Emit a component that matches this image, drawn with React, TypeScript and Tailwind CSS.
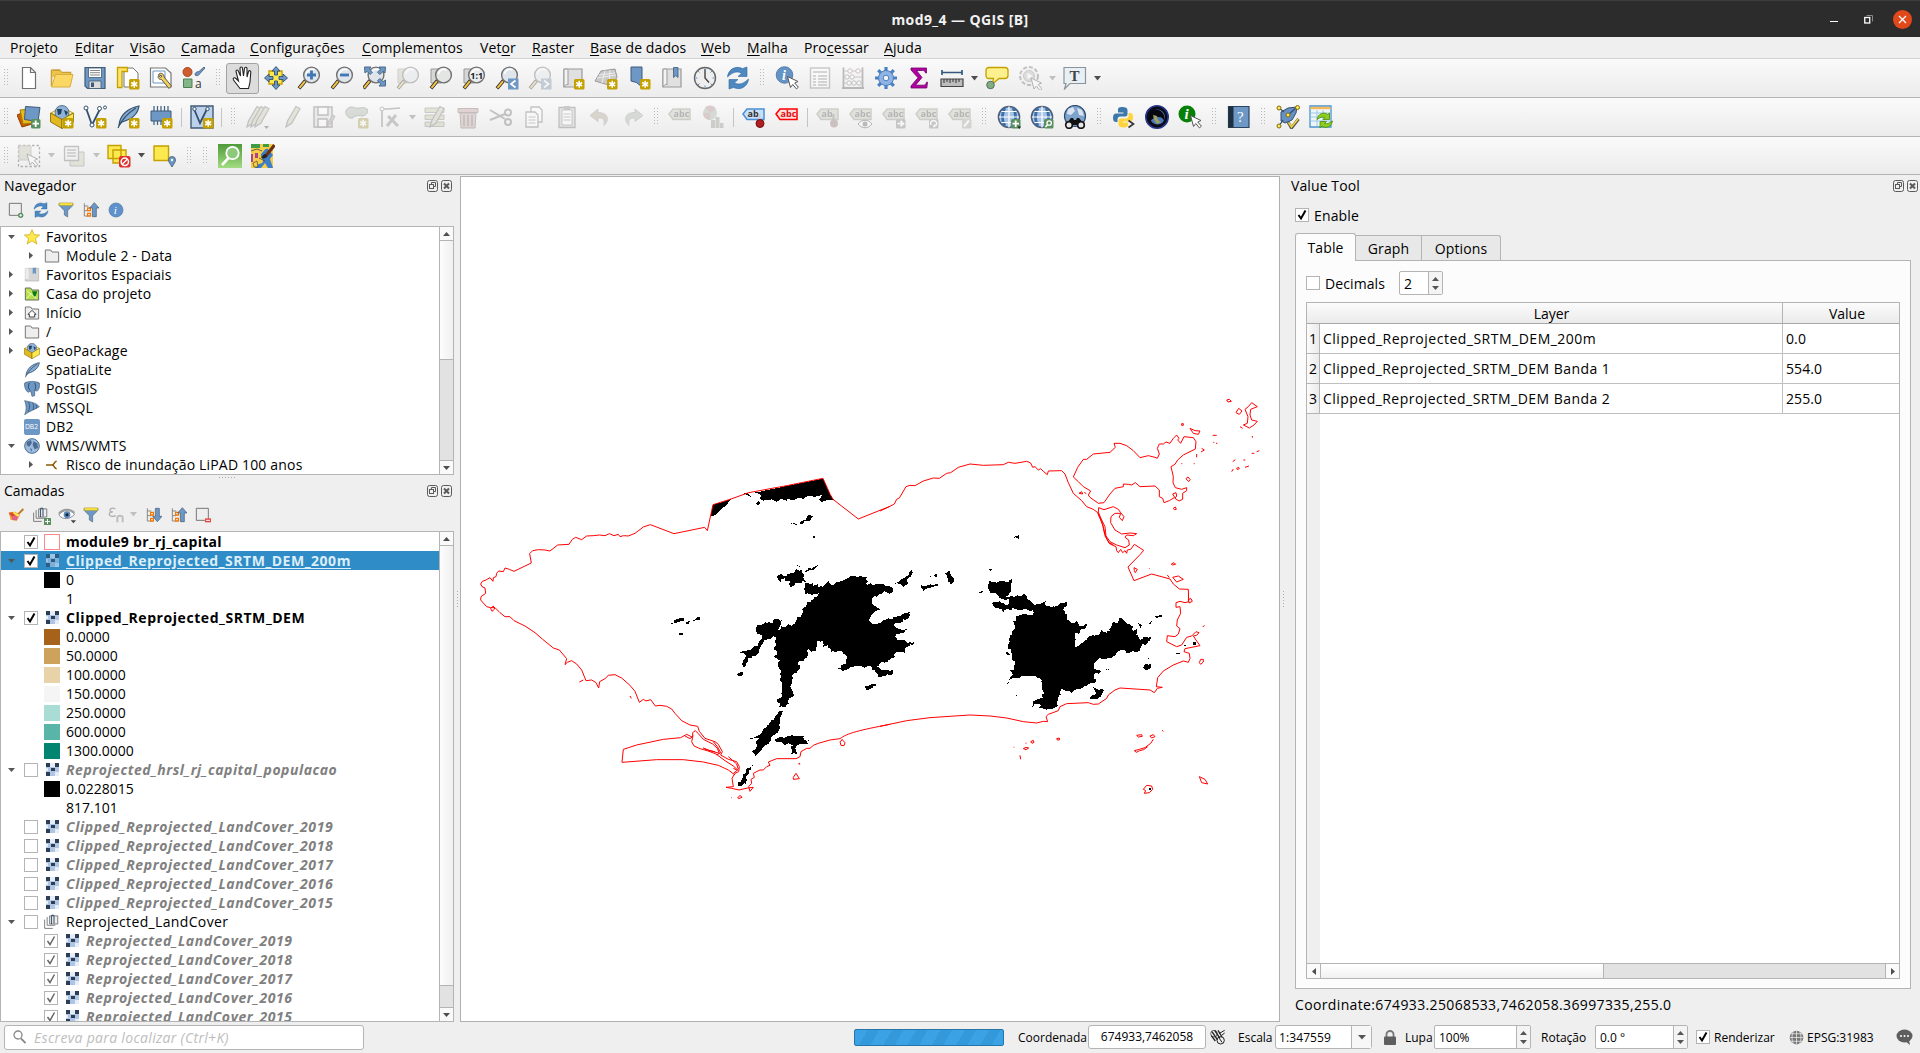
import React from "react";

type Kids = { children?: React.ReactNode };

/* ---------- small helpers ---------- */

function Ic({ children, dim, s = 24 }: Kids & { dim?: boolean; s?: number }) {
  return (
    <svg width={s} height={s} viewBox="0 0 24 24" fill="none" className={dim ? "shrink-0 opacity-40 grayscale-[50%]" : "shrink-0"}>
      {children}
    </svg>
  );
}

const blue = "#6d97c4";
const navy = "#415a75";
const gold = "#c4a000";

const Star = () => (
  <g>
    <rect x="13" y="13" width="10.5" height="10.5" rx="1.5" fill={gold} />
    <path d="M18.2 14.8v7M15.2 16.5l6 3.5M21.2 16.5l-6 3.5" stroke="#fff" strokeWidth="1.5" />
  </g>
);
const Lens = ({ cx = 14.5, fill = "#dfe5ea" }: { cx?: number; fill?: string }) => (
  <g>
    <path d={`M${cx - 6} 14.5L${cx - 12.5} 22.3`} stroke="#2d2d2d" strokeWidth="3.6" />
    <path d={`M${cx - 6.5} 15.2L${cx - 12} 21.8`} stroke="#f6c445" strokeWidth="2" />
    <circle cx={cx} cy="9" r="7.9" fill={fill} stroke="#707070" strokeWidth="1.4" />
    <path d={`M${cx - 5} 8a5.2 5.2 0 0 1 8-3.8`} stroke="#fff" strokeWidth="1.6" />
  </g>
);
const Globe = ({ r = 11, c = "#3c6ea8" }: { r?: number; c?: string }) => (
  <g>
    <circle cx="12" cy="12" r={r} fill="#a8c4e6" stroke="#4d5f78" strokeWidth="1.6" />
    <path d="M8 3c-3.500 5-3.500 13 0 18M16 3c3.500 5 3.500 13 0 18" stroke={c} strokeWidth="2.800" />
    <path d="M12 1.500v21M2 12h20M4.500 6.500h15M4.500 17.500h15" stroke="#fff" strokeWidth="1.200" />
  </g>
);
const Cursor = ({ x = 12, y = 11 }: { x?: number; y?: number }) => (
  <path transform={`translate(${x} ${y})`} d="M0 0l3 11 2.3-3 3.6 4.4 2-1.7L7.2 6.500 10.500 5z" fill="#fff" stroke="#555" strokeWidth="1" />
);
const Tag = ({ t = "abc", fill = "#d9d9cf", stroke = "#b8b8ad", color = "#888" }: { t?: string; fill?: string; stroke?: string; color?: string }) => (
  <g>
    <path d="M1 9l4-5h17v10.500H5z" fill={fill} stroke={stroke} strokeWidth="1.5" />
    <text x="5.500" y="12.300" fontSize="9" fontWeight="700" fontFamily="Open Sans, sans-serif" fill={color}>{t}</text>
  </g>
);
const Badge = ({ children, fill = "#5a9060" }: Kids & { fill?: string }) => (
  <g>
    <rect x="14" y="14" width="9.500" height="9.500" rx="1.500" fill={fill} />
    {children}
  </g>
);
const Sheet = () => <path d="M5.500 1.500h8l5 5v16h-13z M13.500 1.500v5h5" fill="#fff" stroke="#707070" strokeWidth="1.200" />;
const Box3d = () => (
  <g>
    <path d="M1 8l11-6 11 6-11 6z" fill="#fff8c4" stroke={gold} />
    <circle cx="12" cy="7.500" r="7" fill="#8fb2da" stroke={navy} strokeWidth=".8" />
    <path d="M7 4l5 0-1 5-3 1zM14 5l4 2-2 4z" fill="#23405e" />
    <path d="M.5 8L12 14.500v9L.5 17z" fill="#e0b81f" stroke="#806500" strokeWidth=".8" />
    <path d="M23.500 8L12 14.500v9L23.500 17z" fill="#fce94f" stroke="#806500" strokeWidth=".8" />
  </g>
);
const Feather = () => (
  <g>
    <path d="M3 20C4 10 12 3 23 1c-1 7-6 13-17 16z" fill="#86abd2" stroke="#34516e" strokeWidth="1.200" />
    <path d="M2 23C6 14 12 8 20 3" stroke="#34516e" strokeWidth="1.200" />
  </g>
);
const Sync = () => (
  <g>
    <path d="M1.500 11C2 4 9-1 16.500 2.500L21 1v9.500h-9l3.500-3.300C11 4.500 6 6.500 1.500 11z" fill="#4e88c0" stroke="#2f68a2" strokeWidth=".6" />
    <path d="M22.500 13C22 20 15 25 7.500 21.500L3 23v-9.500h9l-3.500 3.300C13 19.500 18 17.500 22.500 13z" fill="#4e88c0" stroke="#2f68a2" strokeWidth=".6" />
  </g>
);
const Pencil = ({ dx = 0 }: { dx?: number }) => (
  <path transform={`translate(${dx} 0)`} d="M7 22l1.500-6L17 1.500l4 2.300-8.300 14.500z" fill="#d0cba0" stroke="#777" strokeWidth="1.200" />
);
const Funnel = () => (
  <g>
    <path d="M1.500 2h21v3l-8 8v9.500l-5-3V13l-8-8z" fill={blue} stroke={navy} strokeWidth=".8" />
    <path d="M2 1.500h20v3.500H2z" fill="#fce94f" stroke={gold} strokeWidth=".8" />
  </g>
);
const Page = () => (
  <g>
    <path d="M3 3h18v18H3z" fill="#e0e0e0" stroke="#999" strokeWidth="1.200" />
    <path d="M3 21V5c0-2 3-3 4-1v15c-1-1.500-3 0-4 2z" fill="#f3f3f3" stroke="#999" />
  </g>
);

/* ---------- toolbar icon drawings ---------- */

const icons: Record<string, React.ReactNode> = {
  new: <Ic><Sheet /></Ic>,
  open: <Ic><path d="M1.500 4h8l2 2.500h9V9M1.500 4v16" fill="#d8a93a" stroke="#c9a038" strokeWidth="1.500" /><path d="M2 5h8l2 2h8v4H2z" fill="#ecc44a" /><path d="M5.500 8.500h17.500L20 21H1.500z" fill="#fbd764" stroke="#d9ae3d" /></Ic>,
  save: <Ic><path d="M2 1.500h20v21H4.500L2 20z" fill={blue} stroke={navy} strokeWidth="1.200" /><path d="M5.500 2h13v9.500h-13z" fill="#fff" stroke={navy} strokeWidth=".8" /><path d="M7 4.500h10M7 6.700h10M7 9h10" stroke="#888" /><path d="M6 15h12v7.500H6z" fill="#dcdcdc" stroke={navy} strokeWidth=".8" /><path d="M8 16.500h3v4.500H8z" fill={navy} /></Ic>,
  layout: <Ic><path d="M8 2h9l5 5v14H8z" fill="#fff" stroke="#777" /><path d="M1.500 1.500h10v4H6v16H1.500z" fill="#fce36b" stroke={gold} strokeWidth="1.300" /><Star /></Ic>,
  layouts: <Ic><path d="M1.500 2h15l5.500 5v14H1.500z" fill="#fff" stroke="#777" strokeWidth="1.200" /><path d="M4 5h12v12H4z" stroke={blue} /><path d="M9.500 8.500c2.500-3 6 0 5.500 2.500l7.500 9-2.500 2.500-7.500-9c-3 0-4-2-3-4l2 1.700 1.500-1z" fill="#f2cf57" stroke="#555" /></Ic>,
  style: <Ic><circle cx="5.500" cy="6" r="4.500" fill="#ce5c30" stroke="#a84418" /><path d="M13 9c0-3 2-3 4-3.500l5-4.500 1 1-5.500 6c-1 2-3 2-4.500 1z" fill={blue} stroke={navy} strokeWidth=".8" /><path d="M1.500 13h8.500v8.500H1.500z" fill="#82b68a" stroke="#4c8054" /><text x="13" y="21.500" fontSize="12" fontFamily="Open Sans, sans-serif" fill="#333">a</text></Ic>,
  pan: <Ic><path d="M9 22.500L2.500 14c-1-2 1-3 2.500-1.500L7.500 15 5 5.500c0-2 2-2 2.500 0L9.500 10 9 2.500c0-2 2.500-2 2.500 0L12.500 10l1-7.500c.3-2 2.500-1.500 2.500 0L16 11l1.500-5.500c.8-1.500 2.500-.8 2.300.8L19 16l-1.500 6.500z" fill="#fff" stroke="#222" strokeWidth="1.100" /></Ic>,
  panSel: <Ic><path d="M5 5h13v13H5z" fill="#fce94f" stroke={gold} strokeWidth="1.400" /><path d="M12 .5l4 4.500h-2.500v4h-3V5H8zM12 23.500l4-4.500h-2.500v-4h-3v4H8zM.5 12L5 8v2.500h4v3H5V16zM23.500 12L19 8v2.500h-4v3h4V16z" fill={blue} stroke="#35506d" strokeWidth=".9" /></Ic>,
  zin: <Ic><Lens /><path d="M14.500 4.500v9M10 9h9" stroke="#3f77b5" strokeWidth="2.800" /></Ic>,
  zout: <Ic><Lens /><path d="M10 9h9" stroke="#3f77b5" strokeWidth="2.800" /></Ic>,
  zfull: <Ic><Lens cx={13} /><path d="M1.500 1h6.500L6.300 3l3.200 3.200-2.300 2.300L4 5.300 2 7zM22.500 1H16l1.700 2-3.200 3.200 2.300 2.300L20 5.300 22 7zM22.500 20H16l1.700-2-3.200-3.200 2.300-2.300L20 15.700l2.500-1.700z" fill={blue} stroke="#4a6b8d" strokeWidth="1" /></Ic>,
  zsel: <Ic dim><path d="M2 3h9v14H2z" fill="#c8c8a0" stroke="#999" /><Lens /></Ic>,
  zlayer: <Ic><path d="M2 3h10v14H2z" fill="#d6d6d6" stroke="#999" /><Lens fill="#e4e6e4" /></Ic>,
  z11: <Ic><path d="M2 3h10v14H2z" fill="#d6d6d6" stroke="#999" /><Lens fill="#e9ecee" /><text x="8.300" y="12.500" fontSize="9" fontWeight="700" fontFamily="Open Sans, sans-serif" fill="#222">1:1</text></Ic>,
  zlast: <Ic><Lens /><rect x="13" y="12.500" width="10.500" height="11" fill={blue} /><path d="M20.500 14.500l-4.500 3.500 4.500 3.500" stroke="#fff" strokeWidth="1.700" /></Ic>,
  znext: <Ic dim><Lens /><rect x="13" y="12.500" width="10.500" height="11" fill={blue} /><path d="M16 14.500l4.500 3.500-4.500 3.500" stroke="#fff" strokeWidth="1.700" /></Ic>,
  map: <Ic><Page /><Star /></Ic>,
  map3d: <Ic><path d="M1 15L7 5l14-2 2 8-5 9z" fill="#c9c9c9" stroke="#999" /><path d="M5 9l16-2M3 12l19-3M11 4.500L8 17M16 4l-1 15" stroke="#eee" /><Star /></Ic>,
  bmNew: <Ic><path d="M4 1h11v20l-5.500-4.500L4 15z" fill={blue} stroke={navy} /><Star /></Ic>,
  bm: <Ic><Page /><path d="M13.500 1.500h4.500v10l-2.200-2-2.300 2z" fill={blue} stroke={navy} strokeWidth=".8" /></Ic>,
  clock: <Ic><circle cx="12" cy="12" r="10.500" fill="#eee" stroke="#666" strokeWidth="1.400" /><path d="M12 3v9l4 4.500" stroke="#444" strokeWidth="1.400" /><path d="M12 2.500v2M12 19.500v2M2.500 12h2M19.500 12h2M5 5l1.500 1.500M19 5l-1.500 1.500M5 19l1.500-1.500M19 19l-1.500-1.500" stroke="#5c8fcc" /></Ic>,
  sync: <Ic><Sync /></Ic>,
  ident: <Ic><circle cx="9.500" cy="9" r="8.300" fill="#6493c6" stroke="#47709e" strokeWidth=".8" /><text x="7" y="14" fontSize="14" fontStyle="italic" fontWeight="700" fontFamily="Liberation Serif, serif" fill="#fff">i</text><Cursor x={12.500} y={10.500} /></Ic>,
  table: <Ic dim><path d="M2.500 2h19v20h-19z" fill="#fff" stroke="#888" strokeWidth="1.500" /><path d="M5 6h14M5 10h3M10 10h9M5 13h3M10 13h9M5 16h3M10 16h9M5 19h3M10 19h9" stroke="#888" strokeWidth="1.600" /></Ic>,
  abacus: <Ic dim><path d="M2.500 1.500v20M21.500 1.500v20M1 22h22" stroke="#666" strokeWidth="1.800" /><path d="M3 5h18M3 11h18M3 17h18" stroke="#888" /><g fill="#fff" stroke="#777"><circle cx="9" cy="5" r="2.200" stroke="#b66" /><circle cx="17" cy="5" r="2.200" stroke="#b66" /><circle cx="6" cy="11" r="2.200" /><circle cx="11" cy="11" r="2.200" /><circle cx="8" cy="17" r="2.200" /><circle cx="13" cy="17" r="2.200" /><circle cx="18" cy="17" r="2.200" /></g></Ic>,
  gear: <Ic><g stroke="#4a7fc0" strokeWidth="3.200"><path d="M12 1v22M1 12h22M4.200 4.200l15.600 15.600M19.800 4.200L4.200 19.800" /></g><circle cx="12" cy="12" r="7.500" fill="#8fb4e3" stroke="#4a7fc0" /><circle cx="12" cy="12" r="2.800" fill="#f4f4f4" stroke="#4a7fc0" /></Ic>,
  sigma: <Ic><path d="M4 2h15.500v5h-1c-.5-2-1.500-2.500-3-2.500H9.500l5.500 7-6.500 7.700h8c1.500 0 2.500-1 3-3h1L19.800 22H4v-2l7-8.300L4 4z" fill="#b000a0" stroke="#72006a" strokeWidth=".8" /></Ic>,
  ruler: <Ic><path d="M2 4v5M22 4v5M2 6.500h20" stroke="#35597e" strokeWidth="1.700" /><path d="M1 13h22v7.500H1z" fill="#bdbdbd" stroke="#444" strokeWidth="1.200" /><path d="M4 13v4M7 13v3M10 13v4M13 13v3M16 13v4M19 13v3" stroke="#333" /></Ic>,
  tip: <Ic><path d="M4 1.500h16c2 0 3 1 3 3v5c0 2-1 3-3 3h-6L7.500 18l1-5.500H4c-2 0-3-1-3-3v-5c0-2 1-3 3-3z" fill="#fdf08e" stroke={gold} strokeWidth="1.300" /><circle cx="5.500" cy="19" r="3.800" fill="#82ac82" stroke="#54755a" /></Ic>,
  gearPlay: <Ic dim><circle cx="11" cy="10" r="9" fill="#eee" stroke="#777" strokeWidth="2" strokeDasharray="4 2" /><circle cx="11" cy="10" r="5.500" fill="#bbb" stroke="#888" /><path d="M9.500 7l5 3-5 3z" fill="#fff" /><Cursor x={13} y={12} /></Ic>,
  text: <Ic><path d="M1 1.500h21.500v16H7L1.500 23 3 17.500H1z" fill="#e9f0f5" stroke="#8a949c" strokeWidth="1.200" /><text x="6.500" y="14.500" fontSize="15" fontWeight="700" fontFamily="Liberation Serif, serif" fill="#444">T</text></Ic>,

  dsm: <Ic><path d="M0 10l9-4 6 13-10 3z" fill="#ce5c00" stroke="#8e3f00" /><path d="M3 5l12-1v14L6 19z" fill="#e9b91e" stroke="#a07b00" /><path d="M8.500 1.500l14.500 1-2 14-13.500-2z" fill={blue} stroke={navy} /><Badge><path d="M18.700 15.500v6.500M15.500 18.700H22" stroke="#fff" strokeWidth="1.800" /></Badge></Ic>,
  gpkg: <Ic><Box3d /><Star /></Ic>,
  vnew: <Ic><path d="M3 3l6 17L17 4" stroke="#35506d" strokeWidth="1.800" /><g fill="#fff" stroke="#35506d"><circle cx="3" cy="3" r="2" /><circle cx="16.500" cy="3.500" r="2" /><circle cx="22" cy="2.500" r="1.500" /><circle cx="9" cy="20" r="2" /></g><Star /></Ic>,
  feather: <Ic><Feather /><Star /></Ic>,
  chip: <Ic><path d="M5 1v19M8.500 1v19M12 1v19M15.500 1v19M19 1v19" stroke="#44678c" strokeWidth="1.300" /><path d="M2 6h20v10H2z" fill={blue} stroke={navy} /><Star /></Ic>,
  virt: <Ic><path d="M1 1h22v22H1z" fill="#bcd2ec" stroke={navy} strokeWidth="1.400" /><path d="M4 4l6 14 7-14" stroke="#35506d" strokeWidth="1.800" /><circle cx="4.500" cy="4" r="1.700" fill="#fff" stroke="#35506d" /><circle cx="17.500" cy="4" r="1.700" fill="#fff" stroke="#35506d" /><Star /></Ic>,
  edits: <Ic dim><Pencil dx={-6} /><Pencil dx={-2} /><Pencil dx={2} /><path d="M18 21h5l-2.500 3z" fill="#555" /></Ic>,
  edit: <Ic dim><Pencil /></Ic>,
  saveE: <Ic dim><path d="M2 2h18v20H2z" fill="#ddd" stroke="#777" strokeWidth="1.500" /><path d="M6 2h10v8H6zM6 14h9v8H6z" fill="#fff" stroke="#777" strokeWidth="1.500" /><path d="M15 21l1-4 5-7 2 1.500-4.500 7.500z" fill="#c99" stroke="#777" /></Ic>,
  poly: <Ic dim><path d="M1 6c1-4 6-5 9-3 4 1 8-2 12 1 2 3-1 7-5 7-4-1-8 0-9 2-4 1-8-3-7-7z" fill="#a9b8a0" stroke="#777" /><Star /></Ic>,
  vert: <Ic dim><path d="M4 22V4h6l12-1" stroke="#777" strokeWidth="1.600" /><circle cx="4" cy="4" r="2" fill="#fff" stroke="#777" /><path d="M9 21l9-11M10 11l10 10" stroke="#888" strokeWidth="3" /></Ic>,
  attrs: <Ic dim><path d="M2 3h19v4.500H2zM2 10h19v4.500H2zM2 17h19v4.500H2z" fill="#c9c98a" stroke="#888" /><Pencil /></Ic>,
  trash: <Ic dim><path d="M2 3.500h20v4H2z" fill="#d99" stroke="#866" /><path d="M4 8h16l-1 15H5z" fill="#d9a5a5" stroke="#866" /><path d="M8 10v11M12 10v11M16 10v11" stroke="#866" strokeWidth="1.500" /></Ic>,
  cut: <Ic dim><path d="M1 5l15 9M1 15l15-6" stroke="#777" strokeWidth="2" /><circle cx="19" cy="17" r="3" stroke="#777" strokeWidth="2" /><circle cx="19" cy="7.500" r="3" stroke="#777" strokeWidth="2" /></Ic>,
  copy: <Ic dim><path d="M9 2h8l3 3v12H9z" fill="#fff" stroke="#777" strokeWidth="1.300" /><path d="M4 7h9l3 3v12H4z" fill="#fff" stroke="#777" strokeWidth="1.300" /><path d="M6.500 12h7M6.500 15h7M6.500 18h7" stroke="#888" /></Ic>,
  paste: <Ic dim><path d="M4 2.500h16v20H4z" fill="#ccc" stroke="#777" strokeWidth="1.300" /><path d="M7 5h10v15H7z" fill="#fff" stroke="#888" /><path d="M8.500 9h7M8.500 12h7M8.500 15h7" stroke="#888" /><path d="M9 1h6v4H9z" fill="#888" /></Ic>,
  undo: <Ic dim><path d="M10 4L2 10.500l8 6V13c5-.5 7 1.500 6 7.500 6-6 4-13-6-13z" fill="#b8a585" stroke="#998" /></Ic>,
  redo: <Ic dim><path d="M14 4l8 6.500-8 6V13c-5-.5-7 1.500-6 7.500-6-6-4-13 6-13z" fill="#a5b5a5" stroke="#999" /></Ic>,
  abc0: <Ic dim><Tag color="#555" fill="#c6c6b0" stroke="#99997c" /></Ic>,
  diag: <Ic dim><circle cx="9" cy="8" r="7" fill="#9bb89b" /><path d="M9 8L4 2.500A7 7 0 0 1 15 4zM9 8v7a7 7 0 0 1-7-7z" fill="#c88" /><path d="M10 15h4v8h-4zM14.500 12h4v11h-4zM19 18h3.500v5H19z" fill="#998" /></Ic>,
  abPin: <Ic><Tag t="ab" fill="#c9e0fa" stroke="#4a8fd8" color="#333" /><path d="M17.500 9v8" stroke="#ccc" strokeWidth="2" /><circle cx="18" cy="18.500" r="4" fill="#b02020" stroke="#701010" /></Ic>,
  abcRed: <Ic><Tag fill="#fdd" stroke="#f00" color="#e01010" /></Ic>,
  lab1: <Ic dim><Tag t="ab" color="#555" fill="#c6c6b0" stroke="#99997c" /><path d="M17.500 9v8" stroke="#777" strokeWidth="2" /><circle cx="18" cy="18.500" r="4" fill="#a77" /></Ic>,
  lab2: <Ic dim><Tag color="#555" fill="#c6c6b0" stroke="#99997c" /><path d="M9 19c4-5 10-5 14 0-4 5-10 5-14 0z" fill="#fff" stroke="#555" /><circle cx="16" cy="19" r="2.500" fill="#667" /></Ic>,
  lab3: <Ic dim><Tag color="#555" fill="#c6c6b0" stroke="#99997c" /><Badge fill="#888"><path d="M15.500 18.700h5M18.500 16l3 2.700-3 2.700" stroke="#fff" strokeWidth="1.700" /></Badge></Ic>,
  lab4: <Ic dim><Tag color="#555" fill="#c6c6b0" stroke="#99997c" /><Badge fill="#888"><path d="M16 20a3 3 0 1 1 3 1.500l.5-2" stroke="#fff" strokeWidth="1.500" /></Badge></Ic>,
  lab5: <Ic dim><Tag color="#555" fill="#c6c6b0" stroke="#99997c" /><Badge fill="#aa9"><path d="M16 21.500l5-6" stroke="#fff" strokeWidth="2" /></Badge></Ic>,
  gAdd: <Ic><Globe r={10.500} /><Badge><path d="M18.700 15.500v6.500M15.500 18.700H22" stroke="#fff" strokeWidth="1.800" /></Badge><path d="M20.500 21.500H24L22.300 24z" fill="#222" /></Ic>,
  gFind: <Ic><Globe r={10.500} /><Badge><circle cx="19.200" cy="18" r="2.200" stroke="#fff" strokeWidth="1.300" /><path d="M17.500 19.800l-2 2.200" stroke="#fff" strokeWidth="1.500" /></Badge></Ic>,
  gBin: <Ic><circle cx="12" cy="11" r="10.500" fill="#7ea3cc" stroke="#2c4a70" strokeWidth="1.200" /><path d="M5 4l5-2 2 4-4 4-4-1zM14 3l5 2 2 6-5-1z" fill="#d9e4f0" /><path d="M2 20l6-7h2l1 2h2l1-2h2l6 7z" fill="#111" /><circle cx="6" cy="20" r="3.300" fill="#e8e8e8" stroke="#111" strokeWidth="1.600" /><circle cx="18" cy="20" r="3.300" fill="#e8e8e8" stroke="#111" strokeWidth="1.600" /></Ic>,
  py: <Ic><path d="M10.500 2c-4 0-4.500 1-4.500 3v2.500h5.500v1H4c-2 0-3 1.700-3 4.500s1 4 3 4h1.500v-2.500c0-2 1-3 3-3h4.500c2 0 2.500-1 2.500-2.500V5c0-2-2-3-5-3z" fill="#3c78aa" /><path d="M16.500 8v2.500c0 2-1 3-3 3H9c-2 0-2.500 1-2.500 2.500v3.500c0 2 2 3 5 3 2.500 0 4.500-.5 4.500-2.500v-2.500h-5v-1h7c2 0 3-1.500 3-4.500S20 8 18 8z" fill="#ffd43b" /><path d="M16.500 15.500l5 3.500-5 3.500" stroke="#333" strokeWidth="1.600" /></Ic>,
  earth: <Ic><circle cx="12" cy="12" r="11.200" fill="#0a0a18" stroke="#26368a" strokeWidth="1.600" /><circle cx="12.500" cy="12" r="7.500" fill="#4a78b8" /><path d="M4.500 13C5 6 11 3 19 6 13 6 10 11 14 20 8 20 5 17 4.500 13z" transform="rotate(75 12 12)" fill="#07070f" /><path d="M8 10l4 1 1 4 3 2-4 2-3-4z" fill="#9b9f64" /></Ic>,
  infoG: <Ic><circle cx="9" cy="9" r="8.500" fill="#078007" /><text x="6.500" y="14.300" fontSize="15" fontStyle="italic" fontWeight="700" fontFamily="Liberation Serif, serif" fill="#fff">i</text><Cursor x={12.500} y={10.500} /></Ic>,
  help: <Ic><path d="M1.500 1.500h20.500v21H1.500z" fill={blue} stroke="#2b4560" strokeWidth="1.200" /><path d="M1.500 1.500h5v21h-5z" fill="#1f2f40" /><text x="10" y="17" fontSize="15" fontFamily="Liberation Serif, serif" fill="#fff">?</text></Ic>,
  topo: <Ic><path d="M5 7l7-4 9-1-1 6-4 7-7 3-4-2z" fill="#6690c4" stroke="#35506d" /><path d="M3 21l4-6M3 3l5 4M12 10l9-8" stroke="#35506d" strokeWidth="1.300" /><g fill="#fce94f" stroke="#806a10"><circle cx="3" cy="3" r="2" /><circle cx="21.500" cy="2.500" r="2" /><circle cx="12" cy="10" r="2" /><circle cx="3" cy="21" r="2" /></g><path d="M12 17l3.500 6 7-9" stroke="#555" strokeWidth="3" /><path d="M12.500 17.500l3 4.500 6.500-8" stroke="#f4d63a" strokeWidth="1.600" /></Ic>,
  tblSync: <Ic><path d="M1 1h21v21H1z" fill="#eef6fc" stroke="#4a94cc" strokeWidth="1.300" /><path d="M1.500 3h20" stroke="#f6b95c" strokeWidth="2.400" /><path d="M1.500 8h20M1.500 12h20M1.500 16h20M8 5v16M14 5v16" stroke="#9cc8e8" /><path d="M8 14.500c1-6 7-8 10.500-5l2-1.500v6.500h-6.500l2-2c-3-1-5 0-8 2zM23.500 16c-1 6-7 8-10.500 5l-2 2v-6.500h6.500L15.500 18.500c3 .5 5-.5 8-2.500z" fill="#8ccf1e" stroke="#4c8a08" strokeWidth=".8" /></Ic>,

  selRect: <Ic dim><path d="M1.500 1.500h21v21h-21z" stroke="#555" strokeWidth="1.300" strokeDasharray="2.500 2" /><path d="M2 2h12v14H2z" fill="#c6c6a4" stroke="#999" /><Cursor x={10} y={10} /></Ic>,
  selForm: <Ic dim><path d="M8 8h14v14H8z" fill="#cfcf9c" stroke="#888" /><path d="M2.500 2.500h14v14h-14z" fill="#eee" stroke="#777" strokeWidth="1.300" /><path d="M5 6h9M5 9h9M5 12h9" stroke="#888" strokeWidth="1.500" /></Ic>,
  desel: <Ic><path d="M1 1.500h13v13H1zM6 6h13v13H6z" fill="#fce94f" stroke={gold} strokeWidth="1.400" /><rect x="12" y="12" width="11.500" height="11.500" rx="2" fill="#e03030" /><circle cx="17.800" cy="17.800" r="3.700" stroke="#fff" strokeWidth="1.500" /><path d="M15 20.500l5.500-5.500" stroke="#fff" strokeWidth="1.500" /></Ic>,
  selLoc: <Ic><path d="M2 2h14.500v14.500H2z" fill="#fce94f" stroke={gold} strokeWidth="1.400" /><path d="M20 23c-2-3.500-3.500-5-3.500-7a3.500 3.500 0 0 1 7 0c0 2-1.500 3.500-3.500 7z" fill={blue} stroke={navy} strokeWidth=".8" /><circle cx="20" cy="16" r="1.200" fill="#fff" /></Ic>,
  osmFind: <Ic><defs><linearGradient id="gr" x1="0" y1="0" x2="0" y2="1"><stop offset="0" stopColor="#4f9a3a" /><stop offset="1" stopColor="#a3dc82" /></linearGradient></defs><path d="M0 0h24v24H0z" fill="url(#gr)" /><circle cx="14.500" cy="9" r="6.200" stroke="#fff" strokeWidth="1.800" fill="#8cc97a" /><path d="M10.500 14L4 21" stroke="#fff" strokeWidth="2.600" /></Ic>,
  osm: <Ic><path d="M0 0h22v24H0z" fill="#f7cd46" /><path d="M0 0h9v4H0zM12 0h6v3h-6z" fill="#3d9c46" /><path d="M4 24c2-6 8-3 8-7s-4-5-1-8 3-5 6-4l5 6-3 4 3 9h-5l-3-5-4 5z" fill="#3d7ec8" /><path d="M0 10h2v8H0zM4 9h3v5H4z" fill="#b3408c" /><path d="M2 19l4-2 1 6H3z" fill="#f7cd46" stroke="#333" strokeWidth=".6" /><path d="M0 7l6-2 5 2M8 14l6 3" stroke="#444" strokeWidth=".8" /><path d="M23.500 1L14 13" stroke="#6c3010" strokeWidth="3.200" /><path d="M14 10c-2 0-2 3-4 3 1.500 2.500 5 2 6-1.500z" fill="#222" /></Ic>,
};

const Handle = ({ w = 16 }: { w?: number }) => {
  const cls = w === 12 ? "w-3" : w === 14 ? "w-3.5" : w === 17 ? "w-[17px]" : "w-4";
  return (
    <div className={`flex h-full shrink-0 items-center justify-center ${cls}`}>
      <svg width="4" height="18" viewBox="0 0 4 18" fill="#b9b9b9" shapeRendering="crispEdges">
        {[0, 3, 6, 9, 12, 15].map((y) => (
          <g key={y}><rect y={y} width="1" height="1" /><rect x="3" y={y} width="1" height="1" /></g>
        ))}
      </svg>
    </div>
  );
};
const Sep = ({ narrow }: { narrow?: boolean }) => (
  <div className={narrow ? "flex w-[7px] shrink-0 justify-center" : "flex w-2 shrink-0 justify-center"}>
    <div className="h-[19px] w-px bg-[#c4c4c4]" />
  </div>
);
const Drop = ({ dim }: { dim?: boolean }) => (
  <div className="flex w-3 shrink-0 justify-center">
    <svg width="7" height="5" viewBox="0 0 7 5"><path d="M0 0h7L3.500 4.500z" fill={dim ? "#c0c0c0" : "#4d4d4d"} /></svg>
  </div>
);
const rows: string[] = [
  "H12 new open save layout layouts style H16 pan panSel zin zout zfull zsel zlayer z11 zlast znext map map3d bmNew bm clock sync H16 ident table abacus gear sigma ruler D tip gearPlay d text D",
  "H12 dsm gpkg vnew feather chip S virt s H16 edits edit saveE poly vert d attrs trash cut copy paste undo redo H14 abc0 diag S abPin abcRed S lab1 lab2 lab3 lab4 lab5 H16 gAdd gFind gBin H16 py earth infoG H16 help H16 topo tblSync",
  "H12 selRect d selForm d desel D selLoc H17 H16 osmFind osm",
];
function Toolbar({ spec, last }: { spec: string; last?: boolean }) {
  return (
    <div className={`flex items-center border-b border-[#b4b4b4] bg-linear-to-b from-[#fafafa] to-[#ececec] ${last ? "h-[38px]" : "h-[39px]"}`}>
      {spec.split(" ").map((k, i) => {
        if (k[0] === "H") return <Handle key={i} w={+k.slice(1)} />;
        if (k === "D" || k === "d") return <Drop key={i} dim={k === "d"} />;
        if (k === "S" || k === "s") return <Sep key={i} narrow={k === "s"} />;
        return (
          <div key={i} className={k === "pan" ? "flex h-[31px] w-[33px] shrink-0 items-center justify-center rounded-[3px] border border-[#a3a3a3] bg-[#dcdcdc]" : "flex w-[33px] shrink-0 items-center justify-center"}>
            {icons[k]}
          </div>
        );
      })}
    </div>
  );
}

const menu: [string, string, string, string][] = [
  ["Pro", "j", "eto", "w-[65px]"], ["", "E", "ditar", "w-[55px]"], ["", "V", "isão", "w-[51px]"], ["", "C", "amada", "w-[69px]"],
  ["", "C", "onfigurações", "w-[112px]"], ["", "C", "omplementos", "w-[118px]"], ["Vet", "o", "r", "w-[52px]"], ["", "R", "aster", "w-[58px]"],
  ["", "B", "ase de dados", "w-[111px]"], ["", "W", "eb", "w-[46px]"], ["", "M", "alha", "w-[57px]"], ["Pro", "c", "essar", "w-[80px]"], ["", "A", "juda", "w-[60px]"],
];

/* ---------- dock pieces ---------- */

const DockButtons = () => (
  <div className="flex gap-[3px] pr-[2px]">
    <svg width="11" height="12" viewBox="0 0 11 12" fill="none" stroke="#5a5a5a"><rect x=".5" y=".5" width="10" height="11" rx="2" /><rect x="2.500" y="4.500" width="4" height="4" /><path d="M4.500 4.500v-2h4v4h-2" /></svg>
    <svg width="11" height="12" viewBox="0 0 11 12" fill="none" stroke="#5a5a5a"><rect x=".5" y=".5" width="10" height="11" rx="2" /><path d="M3 3.500l5 5M8 3.500l-5 5" strokeWidth="2" /></svg>
  </div>
);
const Check = ({ on, gray }: { on?: boolean; gray?: boolean }) => (
  <div className="h-3.5 w-3.5 shrink-0 border border-[#b4b4b4] bg-white">
    {on && <svg width="12" height="12" viewBox="0 0 12 12" fill="none"><path d="M2.500 6l2.500 3.500L9.500 1.500" stroke={gray ? "#666" : "#000"} strokeWidth={gray ? 1.5 : 2} /></svg>}
  </div>
);
const VScroll = ({ thumb, groove }: { thumb: string; groove: string }) => (
  <div className="flex w-[14px] shrink-0 flex-col border-l border-[#b4b4b4]">
    <div className="flex h-[14px] shrink-0 items-center justify-center border-b border-[#b4b4b4] bg-[#fafafa]"><svg width="7" height="4"><path d="M0 4h7L3.500 0z" fill="#4d4d4d" /></svg></div>
    <div className={`bg-linear-to-r from-[#fdfdfd] to-[#f0f0f0] ${thumb}`} />
    <div className={`border-y border-[#b4b4b4] bg-[#e2e2e2] ${groove}`} />
    <div className="flex h-[13px] shrink-0 items-center justify-center bg-[#fafafa]"><svg width="7" height="4"><path d="M0 0h7L3.500 4z" fill="#4d4d4d" /></svg></div>
  </div>
);
const Arrow = ({ kind }: { kind?: string }) => (
  <div className="flex w-5 shrink-0 justify-center">
    {kind === "v" && <svg width="7" height="4"><path d="M0 0h7L3.500 4z" fill="#555" /></svg>}
    {kind === ">" && <svg width="4" height="7"><path d="M0 0v7l4-3.500z" fill="#555" /></svg>}
  </div>
);

const folder = <path d="M2 3h8l2 3h10v15H2z" fill="#eee" stroke="#777" strokeWidth="1.500" />;
const nav: { t: string; a?: string; lv?: number; ic: React.ReactNode }[] = [
  { t: "Favoritos", a: "v", ic: <path d="M12 1l3.200 7.500 8.300.5-6.300 5.500 2 8L12 18l-7.200 4.500 2-8L.5 9l8.300-.5z" fill="#fce94f" stroke="#c4a000" /> },
  { t: "Module 2 - Data", a: ">", lv: 1, ic: folder },
  { t: "Favoritos Espaciais", a: ">", ic: <><path d="M2 2h20v19H2z" fill="#d6d6d6" stroke="#b0b0b0" /><path d="M2 2h5v16H2z" fill="#ececec" /><path d="M13 1h5v10l-2.500-2-2.500 2z" fill={blue} /></> },
  { t: "Casa do projeto", a: ">", ic: <><path d="M2 3h8l2 3h10v15H2z" fill="#b8e04a" stroke="#6b6b6b" strokeWidth="1.500" /><path d="M4 7l15 12M4 19l7-8" stroke="#fff" /><path d="M12 8h8l-2 6-3 2z" fill="#0a7a1c" /></> },
  { t: "Início", a: ">", ic: <>{folder}<path d="M6 14l6-6 6 6h-2v4H8v-4z" fill="#fff" stroke="#222" strokeWidth="1.300" /></> },
  { t: "/", a: ">", ic: folder },
  { t: "GeoPackage", a: ">", ic: <Box3d /> },
  { t: "SpatiaLite", ic: <Feather /> },
  { t: "PostGIS", ic: <><path d="M1 3c4-3 18-3 22 0 1 5-1 12-4 12l-3-1v8l-4 1-2-8-4 2C2 14 0 7 1 3z" fill={blue} stroke={navy} /><path d="M8 3c-2 4-2 8 1 11M16 3c2 4 2 8 0 11" stroke="#2c4764" strokeWidth="1.300" /></> },
  { t: "MSSQL", ic: <><path d="M1 1c9 2 17 3 22 9-6 4-14 6-22 12 3-6 3-14 0-21z" fill={blue} stroke={navy} /><path d="M7 3c2 5 2 10-1 15M13 5c2 4 2 7 0 10M18 7c1 2 1 4 0 6" stroke="#2c4764" /></> },
  { t: "DB2", ic: <><rect x="0" y="0" width="24" height="24" rx="3" fill={blue} /><text x="1.500" y="15" fontSize="10" fontFamily="Open Sans, sans-serif" fill="#fff">DB2</text></> },
  { t: "WMS/WMTS", a: "v", ic: <><circle cx="12" cy="12" r="11" fill="#9cbade" stroke="#4a6c90" strokeWidth="1.500" /><path d="M4 6l6-3 2 4-4 6-4-2zM14 5l6 3 1 7-5 2-3-6zM9 15l3 2-1 4z" fill="#4a6c90" /></> },
  { t: "Risco de inundação LiPAD 100 anos", a: ">", lv: 1, ic: <path d="M3 12h9M19 6.500c-4 0-3 5.500-7 5.500 4 0 3 5.500 7 5.500" stroke="#8f5902" strokeWidth="2.200" /> },
];

const raster = (
  <svg width="13" height="13" viewBox="0 0 13 13" shapeRendering="crispEdges" className="ml-px shrink-0">
    <path d="M0 0h13v13H0z" fill="#aec6e4" />
    <path d="M4 0h5v4H4zM0 5h2v3H0zM9 9h4v4H9z" fill="#e6edf6" />
    <path d="M0 0h4v4H0zM9 0h4v4H9zM5 5h4v3H5zM0 9h4v4H0z" fill="#2c3e56" />
  </svg>
);
const group = (
  <svg width="15" height="15" viewBox="0 0 24 24" fill="none"><path d="M1 9v14h13M5 5v13h13" stroke="#777" strokeWidth="1.500" /><path d="M9 3h13v13H9z" fill="#eee" stroke="#777" strokeWidth="1.500" /><path d="M12 16V4c0-3 4-3 4 0v11" stroke={navy} strokeWidth="1.800" /></svg>
);

type L = { t: string; k: "layer" | "sw" | "group"; a?: boolean; on?: boolean; c?: string; st?: "b" | "i" | "sel"; lv?: number; tr?: string };
const years = ["2019", "2018", "2017", "2016", "2015"];
const layers: L[] = [
  { t: "module9 br_rj_capital", k: "layer", on: true, c: "outline", st: "b", tr: "tracking-[0.3px]" },
  { t: "Clipped_Reprojected_SRTM_DEM_200m", k: "layer", a: true, on: true, st: "sel", tr: "tracking-[0.54px]" },
  { t: "0", k: "sw", c: "bg-black" },
  { t: "1", k: "sw" },
  { t: "Clipped_Reprojected_SRTM_DEM", k: "layer", a: true, on: true, st: "b", tr: "tracking-[0.56px]" },
  { t: "0.0000", k: "sw", c: "bg-[#a6611a]" },
  { t: "50.0000", k: "sw", c: "bg-[#cca25d]" },
  { t: "100.0000", k: "sw", c: "bg-[#e7d3a7]" },
  { t: "150.0000", k: "sw", c: "bg-[#f5f5f5]" },
  { t: "250.0000", k: "sw", c: "bg-[#a9dcd4]" },
  { t: "600.0000", k: "sw", c: "bg-[#58b5a8]" },
  { t: "1300.0000", k: "sw", c: "bg-[#018571]" },
  { t: "Reprojected_hrsl_rj_capital_populacao", k: "layer", a: true, st: "i", tr: "tracking-[0.53px]" },
  { t: "0.0228015", k: "sw", c: "bg-black" },
  { t: "817.101", k: "sw" },
  ...years.map((y): L => ({ t: "Clipped_Reprojected_LandCover_" + y, k: "layer", st: "i", tr: "tracking-[0.61px]" })),
  { t: "Reprojected_LandCover", k: "group", a: true, tr: "tracking-[0.35px]" },
  ...years.map((y): L => ({ t: "Reprojected_LandCover_" + y, k: "layer", st: "i", on: true, lv: 1, tr: "tracking-[0.59px]" })),
];

function LayerRow({ l }: { l: L }) {
  const tone = l.st === "b" ? "font-bold" : l.st === "i" ? "font-bold italic text-[#808080]" : l.st === "sel" ? "font-bold text-[#dbeefa] underline underline-offset-2" : "";
  return (
    <div className={`flex h-[19px] shrink-0 items-center ${l.st === "sel" ? "bg-[#308cc6]" : ""}`}>
      <Arrow kind={l.a ? "v" : ""} />
      {l.lv ? <div className="w-5 shrink-0" /> : null}
      {l.k === "sw" ? <div className="w-[23px] shrink-0" /> : <div className="flex w-[23px] shrink-0 pl-[3px]"><Check on={l.on} gray={!!l.lv} /></div>}
      <div className="flex w-[22px] shrink-0 items-center">
        {l.k === "sw" ? <div className={`h-4 w-4 ${l.c ?? ""}`} /> : l.k === "group" ? group : l.c ? <div className="h-4 w-4 border border-[#f88]" /> : <div className={l.st === "sel" ? "pl-px opacity-60" : "pl-px"}>{raster}</div>}
      </div>
      <span className={`whitespace-pre ${tone} ${l.tr ?? "tracking-[0.02px]"}`}>{l.t}</span>
    </div>
  );
}

/* ---------- map ---------- */

function rough(src: string, amp: number, seed: number) {
  const pts = src.trim().split(/\s+/).map((p) => p.split(",").map(Number));
  let s = seed;
  const rnd = () => ((s = (s * 16807) % 2147483647) / 2147483647) - 0.5;
  const out: string[] = [];
  pts.forEach((p, i) => {
    const q = pts[(i + 1) % pts.length];
    const n = Math.max(1, Math.round(Math.hypot(q[0] - p[0], q[1] - p[1]) / 7));
    for (let k = 0; k < n; k++) {
      const a = k ? amp : 0;
      out.push(`${(p[0] + ((q[0] - p[0]) * k) / n + rnd() * a).toFixed(1)},${(p[1] + ((q[1] - p[1]) * k) / n + rnd() * a).toFixed(1)}`);
    }
  });
  return out.join(" ");
}

const blobsW = [
  "1005,430 1028,430 1045,440 1060,440 1075,422 1083,435 1110,425 1150,408 1190,410 1195,425 1188,432 1240,432 1268,445 1262,460 1240,455 1225,465 1205,475 1210,495 1230,510 1210,520 1195,540 1210,552 1230,550 1240,540 1280,530 1322,517 1315,535 1270,555 1280,565 1315,565 1275,590 1280,600 1305,600 1315,610 1333,607 1330,615 1310,620 1305,642 1295,635 1275,640 1275,652 1245,668 1230,668 1220,680 1235,690 1268,690 1268,702 1245,708 1225,710 1215,690 1195,678 1150,680 1118,692 1103,686 1128,672 1130,655 1120,635 1085,638 1075,615 1060,620 1058,603 1040,606 1038,635 1025,635 1015,628 1010,655 985,665 990,685 980,700 965,705 970,715 960,740 972,765 957,775 957,790 945,803 928,800 920,780 936,768 936,745 930,720 933,690 925,675 930,662 915,655 920,635 910,630 918,615 915,590 890,600 872,618 862,642 835,655 830,668 820,682 817,675 825,655 828,645 808,640 835,630 855,618 873,600 875,585 858,575 863,555 885,546 910,548 915,536 935,541 932,555 925,570 955,553 965,558 975,551 980,531 1000,520 995,508 1010,493 1030,478 1048,460 1005,462",
  "920,408 933,402 940,408 960,400 975,393 998,386 1001,408 1007,425 985,430 965,440 955,432 960,422 935,417 932,426",
  "925,815 938,815 930,835 928,870 918,882 902,895 897,912 880,922 867,937 855,948 845,935 860,920 858,905 868,896 835,895 866,886 880,866 900,848 913,836",
  "913,896 940,893 985,888 1002,888 1004,900 1018,900 1014,914 995,911 978,920 984,943 962,943 969,916 940,912 918,906",
  "850,975 837,992 830,1020 829,1032 810,1038 804,1028 815,1018 828,990",
  "1183,740 1220,728 1217,737 1195,749",
  "600,552 612,541 643,535 642,543", "645,549 688,531 691,538 670,544 648,552", "624,586 628,580 638,580 638,585",
  "802,703 812,697 820,704 806,709", "962,247 990,247 1008,239 1014,227 1028,229 1012,244 990,251 964,251",
  "1005,393 1028,383 1045,373 1042,380 1025,390 1006,396", "858,190 866,184 872,190 864,196", "980,376 990,378 988,381", "1030,289 1034,289 1034,294 1030,294",
];
const topW = [
  "728,195 782,178 768,198 755,205 740,222 730,228 722,228",
  "855,157 875,154 945,139 1059,116 1081,164 1092,180 1070,180 1055,187 1048,178 1057,165 1035,170 1015,168 1000,176 985,174 970,180 950,177 950,183 935,176 920,185 905,178 880,182 868,175 875,165",
  "822,160 835,160 842,170",
];
const blobsE = [
  "323,625 328,603 350,608 365,602 385,606 396,598 394,635 387,645 375,655 360,655 350,642 335,640",
  "330,670 358,664 385,675 388,660 370,658 372,650 400,650 435,644 450,660 460,672 480,672 497,663 500,678 525,680 562,668 550,688 562,705 560,718 575,730 590,723 597,738 622,735 600,750 597,762 584,762 587,780 584,803 610,786 630,768 655,766 665,750 680,758 690,753 695,728 715,728 725,713 737,728 750,730 757,748 770,748 767,765 780,780 815,768 812,783 787,793 780,812 740,820 730,810 715,813 705,830 680,838 660,834 642,850 642,865 662,875 642,885 647,907 620,918 590,927 575,938 555,930 542,930 542,944 532,965 527,982 500,989 478,983 478,972 455,982 458,963 488,953 485,900 470,892 440,887 415,895 398,894 378,911 398,885 390,870 403,868 406,850 398,840 394,815 384,800 388,775 397,755 406,740 396,722 413,725 408,708 438,703 458,705 458,690 420,690 385,687 370,696 356,685 343,680",
  "628,958 632,948 650,942 640,922 655,930 675,930 665,944 650,958", "788,862 795,852 812,852 815,862 802,872",
  "775,730 786,735 780,745", "806,730 815,724 812,732", "825,710 846,704 848,709 828,714", "888,819 900,819 900,822 888,822", "939,787 948,787 948,795 939,795",
  "797,838 808,834 808,838", "677,869 688,869 688,872", "621,641 624,641 624,644", "402,944 410,944 410,947", "297,637 308,633 306,641", "326,566 338,566 332,573",
  "196,580 208,573 214,588 222,602 213,615 203,603", "116,610 135,618 150,613 176,611 172,619 150,623 130,632", "45,612 60,603 65,597 80,589 95,570 98,578 92,591 80,600 84,608 70,620 60,612",
  "162,584 172,582 172,590 164,590", "400,473 418,465 416,476", "370,499 384,500 384,503", "376,815 384,818 392,828 382,824", "806,1224 812,1224 812,1230 806,1230", "908,795 918,795 918,798", "148,588 153,588 153,592",
];
const coastW =
  "M1260,199 L1240,207 1165,237 1089,178 1081,164 1059,115 945,138 836,158 780,178 729,194 712,272 704,262 612,281 541,254 520,261 495,280 475,288 460,287 450,290 445,283 432,287 418,281 405,287 388,285 370,287 350,288 335,299 317,292 307,298 297,313 263,315 240,333 225,330 205,329 188,332 179,341 184,369 132,394 118,388 105,384 100,395 86,393 80,400 78,410 70,413 69,424 60,413 48,420 37,424 32,432 36,440 45,444 47,460 33,470 32,480 50,500 62,503 75,503 90,518 105,530 120,530 132,542 165,558 195,578 218,598 250,624 268,630 290,656 285,674 292,667 305,662 320,672 335,690 348,722 365,720 378,728 386,744 389,725 405,716 415,706 435,704 455,714 480,736 495,754 508,787 520,778 528,783 542,779 556,798 570,796 590,799 605,807 615,820 635,842 660,855 683,859 688,874 705,895 735,905 745,913 757,935 752,945 775,958 800,965 808,980 806,995 795,1000 786,1015 790,1040 768,1042 785,1045 807,1050 833,1044 850,1042 840,1054 836,1040 845,1030 843,1018 853,1012 850,1000 870,990 880,990 890,980 900,976 895,966 920,956 978,956 990,950 993,935 1010,925 1020,925 1030,916 1045,910 1080,900 1110,896 C1130,880 1170,870 1260,853";
const coastW2 =
  "M795,1005 L775,990 745,976 700,966 640,959 560,959 456,967 460,928 500,915 580,898 632,893 650,883 668,892 665,905 672,918 690,926 712,932 738,942 765,962 790,978 803,990 790,1000 M668,892 L668,878 676,872 684,880 700,898 728,912 742,925 748,940 720,932 700,924 710,930 735,935 M645,888 L660,896 670,888 M62,505 L70,498 74,507 66,514Z M730,905 L742,920 752,938 740,945 M775,950 L800,972 804,985 M790,985 L800,990 806,985";
const isletsW =
  "M1115,897 L1125,908 1122,917 1113,916 1110,905 1116,900 M970,1012 L978,1000 988,1016 970,1018Z M985,971 l4,-1 0,4 M328,726 L340,720 M480,768 L484,775 M803,1074 L810,1066 816,1072 806,1076Z M784,1073 l2,0";
const coastE =
  "M0,393 L20,384 43,372 50,358 58,354 78,320 90,316 105,317 130,303 160,294 178,295 200,280 212,278 235,262 270,252 310,256 370,254 385,247 405,250 440,244 452,249 458,262 465,260 475,270 482,266 490,274 502,284 505,273 545,272 555,282 565,308 580,340 605,362 620,380 640,388 652,397 663,420 670,440 676,470 690,492 708,500 710,512 715,518 722,508 728,518 735,512 740,520 742,510 752,508 763,493 791,511 780,524 744,561 762,602 815,582 870,597 880,612 898,627 925,628 926,665 915,668 900,664 888,668 888,682 900,680 902,700 892,720 890,738 900,746 895,762 885,770 862,767 860,785 890,800 905,795 920,772 935,768 948,755 957,758 950,766 940,768 948,780 960,797 915,806 912,815 928,820 930,835 925,847 910,843 880,855 850,873 833,893 829,920 847,922 832,925 823,938 810,930 720,924 705,930 685,945 680,955 655,972 640,973 625,968 560,971 540,980 535,992 505,1003 498,1010 503,1025 490,1024 470,1029 430,1025 380,1014 330,1008 270,1005 150,1013 80,1022 0,1039";
const coastE2 =
  "M580,291 L593,262 610,238 620,238 640,222 690,217 706,202 702,190 720,190 740,197 760,212 780,233 805,227 825,232 832,235 838,222 832,205 838,192 850,192 858,186 870,190 880,175 890,165 897,175 893,180 902,190 912,170 940,173 948,185 946,207 910,225 893,240 885,253 873,260 880,290 879,308 886,323 905,328 920,323 920,332 908,340 908,358 897,363 885,355 890,348 888,338 878,342 884,352 868,362 852,368 848,355 838,350 838,330 825,318 780,320 766,308 755,315 745,313 730,312 730,320 705,325 690,342 672,368 655,370 630,352 625,345 632,333 610,320 595,305Z M656,383 L672,389 700,380 715,388 722,398 732,410 727,422 718,412 722,400 705,400 693,410 692,428 705,450 725,462 750,459 770,461 760,467 740,465 735,472 746,480 748,495 735,503 710,495 690,485 678,468 675,440 665,420 655,397Z M655,397 L658,410 667,432 674,462 686,488 700,494";
const isletsE =
  "M930,145 L945,152 960,153 955,163 940,160Z M905,131 h5 v5 h-5Z M1040,60 l8,-2 6,6 -10,2Z M1068,98 l8,-13 10,8 -8,10Z M1095,88 L1105,80 1115,68 1132,80 1112,88 1110,105 1115,120 1132,124 1122,135 1108,144 1090,135 1102,130 1104,110Z M1080,140 l8,5 M1117,168 l0,5 M998,166 h12 M1000,187 h3 M1008,190 h4 M965,205 l8,5 -10,6 M950,222 l0,10 M904,251 h3 M941,251 h3 M1130,215 l8,-3 M1115,220 l8,0 M1058,245 l8,-6 M1090,240 l6,0 M1095,262 l12,-4 M1070,265 l6,-3 2,4 -6,3Z M1055,275 l5,-8 M918,296 l6,-5 7,8 -5,6Z M880,385 l6,-4 3,7 -6,1Z M597,340 l8,-5 3,7Z M613,337 l6,4 M762,563 l10,5 -6,10 -3,-6Z M808,566 l2,0 M874,552 l8,-4 5,5 -10,2Z M878,592 L895,588 910,598 890,606Z M862,585 l6,8 M925,658 l8,-2 4,8 -10,5Z M968,740 l6,-3 M958,848 l4,-10 8,0 0,8 -8,7Z M770,1066 l15,-2 2,5 -12,2Z M810,1068 l10,-4 5,6 -10,4Z M763,1112 L778,1108 795,1103 812,1090 820,1078 M763,1112 l6,5 10,-5 12,-3 12,-9 M846,1051 l4,3 M530,1076 l8,-2 0,6 -6,0Z M452,1085 l8,-4 2,6 -6,3Z M430,1106 l8,-4 8,2 -8,5Z M438,1088 l0,3 M401,1102 l2,0 M420,1126 l2,12 M958,1190 L975,1198 983,1212 965,1208Z M790,1228 L800,1216 815,1218 818,1228 808,1238 793,1240 797,1232Z";

function MapView() {
  return (
    <svg viewBox="461 177 818 844" className="h-full w-full" shapeRendering="crispEdges">
      <g transform="translate(470 440) scale(.333333)">
        <g fill="#000">
          {blobsW.map((b, i) => <polygon key={i} points={rough(b, 9, 31 + i)} />)}
          {topW.map((b, i) => <polygon key={i} points={b} />)}
        </g>
        <path d={coastW + coastW2 + isletsW} fill="none" stroke="#ff0000" strokeWidth="3" shapeRendering="auto" />
      </g>
      <g transform="translate(880 380) scale(.333333)">
        <g fill="#000">{blobsE.map((b, i) => <polygon key={i} points={rough(b, i === 1 ? 9 : 5, 97 + i)} />)}</g>
        <path d={coastE + coastE2 + isletsE} fill="none" stroke="#ff0000" strokeWidth="3" shapeRendering="auto" />
      </g>
    </svg>
  );
}

/* ---------- value tool ---------- */

const values = [
  ["1", "Clipped_Reprojected_SRTM_DEM_200m", "0.0"],
  ["2", "Clipped_Reprojected_SRTM_DEM Banda 1", "554.0"],
  ["3", "Clipped_Reprojected_SRTM_DEM Banda 2", "255.0"],
];
const Spin = ({ cls, children }: Kids & { cls: string }) => (
  <div className={`flex rounded-[2px] border border-[#b4b4b4] bg-white ${cls}`}>
    <span className="flex-1 self-center pl-1">{children}</span>
    <div className="flex w-[14px] flex-col items-center justify-center gap-[5px] border-l border-[#b4b4b4] bg-[#f4f4f4]">
      <svg width="7" height="4"><path d="M0 4h7L3.500 0z" fill="#555" /></svg>
      <svg width="7" height="4"><path d="M0 0h7L3.500 4z" fill="#555" /></svg>
    </div>
  </div>
);

export default function App() {
  return (
    <div className="flex h-[1053px] w-[1920px] flex-col overflow-hidden bg-[#efefef] font-['Open_Sans','Noto_Sans',sans-serif] text-[14px] leading-[19px] text-black">
      <div className="flex h-[37px] shrink-0 items-center border-t border-[#3c3c3c] bg-[#2c2c2c]">
        <div className="w-[150px]" />
        <div className="flex-1 text-center text-[14px] font-bold tracking-[0.4px] text-[#f2f2f2]">mod9_4 — QGIS [B]</div>
        <div className="flex w-[150px] items-center">
          <div className="ml-[60px] mt-1 h-px w-2 bg-white" />
          <svg width="9" height="9" viewBox="0 0 9 9" fill="none" className="ml-[26px]"><path d="M2.500 .5h6v6" stroke="#888" /><rect x=".75" y="2.500" width="5" height="5.500" stroke="#fff" strokeWidth="1.300" /></svg>
          <div className="ml-[20px] flex h-[19px] w-[19px] items-center justify-center rounded-full bg-[#e2491a]">
            <svg width="9" height="9"><path d="M1 1l7 7M8 1L1 8" stroke="#fff" strokeWidth="1.300" /></svg>
          </div>
        </div>
      </div>

      <div className="flex h-[22px] shrink-0 items-center border-b border-[#d2d2d2] pl-[10px] tracking-[0.1px]">
        {menu.map(([a, u, b, w], i) => (
          <span key={i} className={`shrink-0 whitespace-pre ${w}`}>{a}<span className="underline underline-offset-2">{u}</span>{b}</span>
        ))}
      </div>
      {rows.map((r, i) => <Toolbar key={i} spec={r} last={i === 2} />)}

      <div className="flex min-h-0 flex-1">
        {/* left docks */}
        <div className="flex w-[454px] shrink-0 flex-col">
          <div className="flex h-[21px] items-center justify-between pl-1 pr-0"><span className="tracking-[0.12px]">Navegador</span><DockButtons /></div>
          <div className="flex h-[30px] items-center gap-[9px] pb-[3px] pl-2">
            <Ic s={16}><path d="M2 2h18v18H2z" fill="#eee" stroke="#777" strokeWidth="1.500" /><circle cx="19" cy="20" r="4" fill="#5a9060" /><path d="M19 18v4M17 20h4" stroke="#fff" strokeWidth="1.300" /></Ic>
            <Ic s={16}><Sync /></Ic>
            <Ic s={16}><Funnel /></Ic>
            <Ic s={16}><path d="M2 2v19h6M2 6h6M2 13h6" stroke="#888" strokeWidth="1.500" /><path d="M7 9h4v4H7zM7 17h4v4H7z" fill="#fff" stroke="#f57900" strokeWidth="2" /><path d="M17 1l7 8h-4v13h-6V9h-4z" fill={blue} stroke={navy} /></Ic>
            <Ic s={16}><circle cx="12" cy="12" r="10.500" fill="#5f91cb" stroke="#4a74a3" /><text x="8.500" y="18" fontSize="17" fontStyle="italic" fontFamily="Liberation Serif, serif" fill="#fff">i</text></Ic>
          </div>
          <div className="flex h-[249px] border border-[#b4b4b4] bg-white">
            <div className="flex-1">
              {nav.map((n, i) => (
                <div key={i} className="flex h-[19px] items-center">
                  {n.lv ? <div className="w-5" /> : null}
                  <Arrow kind={n.a} />
                  <div className="w-[25px] pl-[3px]"><Ic s={16}>{n.ic}</Ic></div>
                  <span className="tracking-[0.17px]">{n.t}</span>
                </div>
              ))}
            </div>
            <VScroll thumb="flex-1" groove="h-[102px]" />
          </div>
          <div className="flex h-[5px] items-center justify-center gap-[2px]">
            {[0, 1, 2, 3, 4, 5].map((i) => <div key={i} className="h-px w-px bg-[#aaa]" />)}
          </div>
          <div className="flex h-[21px] items-center justify-between pl-1"><span>Camadas</span><DockButtons /></div>
          <div className="flex h-[30px] items-center gap-[9px] pb-[3px] pl-2">
            <Ic s={16}><path d="M23 3l-8 8" stroke="#c07a20" strokeWidth="3" /><path d="M1 8l10-1 7 5-5 9-9-2z" fill="#f0a030" /><path d="M1 9l7-1 4 4-6 3z" fill="#d84a3a" /><path d="M6 15l7-3 3 2-3 6-7-1z" fill="#e0608a" /><path d="M9 7l8 5-2 3-8-6z" fill="#fce94f" /></Ic>
            <div className="relative h-4 w-4">{group}<div className="absolute -bottom-0.5 -right-0.5"><svg width="7" height="7"><path d="M0 0h7v7H0z" fill="#5a9060" /><path d="M3.500 1v5M1 3.500h5" stroke="#fff" /></svg></div></div>
            <Ic s={18}><path d="M1 12C6 5 16 4 22 11 16 18 7 19 1 12z" fill="#fff" stroke="#667" /><path d="M1 10C6 3 17 3 22 9" stroke="#999" strokeWidth="2" /><circle cx="12" cy="11.500" r="4.500" fill="#5c88b8" /><circle cx="12" cy="11.500" r="2" fill="#123" /><path d="M17 19h7l-3.500 4z" fill="#444" /></Ic>
            <div className="-ml-0.5"><Ic s={16}><Funnel /></Ic></div>
            <Ic s={16} dim><path d="M11 3C7 .5 2.500 2 3 5c.2 1.500 2 2.300 4.500 2.300C4.500 7.300 2 8.500 2 11c0 3.500 6 4 9.500 1.500" stroke="#555" strokeWidth="2" /><path d="M14 23v-7c0-4 8-4 8 0v7" stroke="#777" strokeWidth="3" /></Ic>
            <div className="-mx-[6px]"><Drop dim /></div>
            <div className="ml-1"><Ic s={16}><path d="M2 2v19h6M2 6h6M2 13h6" stroke="#888" strokeWidth="1.500" /><path d="M7 8h4v4H7zM7 17h4v4H7z" fill="#fff" stroke="#f57900" strokeWidth="2" /><path d="M17 22l7-8h-4V2h-6v12h-4z" fill={blue} stroke={navy} /></Ic></div>
            <Ic s={16}><path d="M2 2v19h6M2 6h6M2 13h6" stroke="#888" strokeWidth="1.500" /><path d="M7 8h4v4H7zM7 17h4v4H7z" fill="#fff" stroke="#f57900" strokeWidth="2" /><path d="M17 1l7 8h-4v13h-6V9h-4z" fill={blue} stroke={navy} /></Ic>
            <div className="-ml-px"><Ic s={16}><path d="M2 2h18v18H2z" fill="#eee" stroke="#777" strokeWidth="1.500" /><path d="M15 17h9v6h-9z" fill="#e44" /><path d="M16.500 20h6" stroke="#fff" strokeWidth="1.500" /></Ic></div>
          </div>
          <div className="flex h-[491px] overflow-hidden border border-[#b4b4b4] bg-white">
            <div className="flex flex-1 flex-col overflow-hidden">{layers.map((l, i) => <LayerRow key={i} l={l} />)}</div>
            <VScroll thumb="flex-1" groove="h-[23px]" />
          </div>
        </div>

        {/* map canvas */}
        <div className="flex w-[6px] shrink-0 flex-col items-center justify-center gap-[2px]">
          {[0, 1, 2, 3, 4, 5].map((i) => <div key={i} className="h-px w-px bg-[#aaa]" />)}
        </div>
        <div className="mt-px h-[846px] w-[820px] shrink-0 border border-[#b0b0b0] bg-white"><MapView /></div>
        <div className="flex w-[7px] shrink-0 flex-col items-center justify-center gap-[2px]">
          {[0, 1, 2, 3, 4, 5].map((i) => <div key={i} className="h-px w-px bg-[#aaa]" />)}
        </div>

        {/* value tool */}
        <div className="flex flex-1 flex-col pl-[3px]">
          <div className="flex h-[21px] items-center justify-between"><span className="pl-px tracking-[0.1px]">Value Tool</span><DockButtons /></div>
          <div className="mt-[9px] flex h-5 items-center gap-[5px] pl-[5px]"><Check on /><span className="tracking-[0.15px]">Enable</span></div>
          <div className="mt-[7px] flex h-[28px] items-end pl-[5px] tracking-[0.15px]">
            <div className="z-10 -mb-px flex h-[28px] w-[61px] items-center justify-center rounded-t-[3px] border border-b-0 border-[#b4b4b4] bg-[#fcfcfc]">Table</div>
            <div className="flex h-[25px] w-[66px] items-center justify-center border border-b-0 border-l-0 border-[#b4b4b4] bg-[#e8e8e8]">Graph</div>
            <div className="flex h-[25px] w-[79px] items-center justify-center rounded-tr-[3px] border border-b-0 border-l-0 border-[#b4b4b4] bg-[#e8e8e8]">Options</div>
          </div>
          <div className="ml-[5px] flex h-[729px] w-[616px] flex-col border border-[#b4b4b4] bg-[#fcfcfc] px-[10px] pt-[10px]">
            <div className="flex h-6 items-center"><Check /><span className="ml-[5px] w-[74px] tracking-[0.1px]">Decimals</span><Spin cls="h-6 w-[44px]">2</Spin></div>
            <div className="mt-[7px] flex h-[677px] flex-col border border-[#b4b4b4] bg-white">
              <div className="flex h-[21px] shrink-0 border-b border-[#a8a8a8] bg-linear-to-b from-[#fbfbfb] to-[#ebebeb]">
                <div className="flex w-[476px] items-center justify-center border-r border-[#b4b4b4] pl-[14px]">Layer</div>
                <div className="flex-1 self-center text-center"><span className="pl-[12px]">Value</span></div>
              </div>
              {values.map(([n, a, b]) => (
                <div key={n} className="flex h-[30px] shrink-0">
                  <div className="flex w-[13px] items-center justify-center border-b border-r border-[#b4b4b4] bg-linear-to-r from-[#fbfbfb] to-[#ebebeb]">{n}</div>
                  <div className={`flex w-[463px] items-center border-b border-r border-[#c0c0c0] pl-[3px] ${n === "1" ? "tracking-[0.5px]" : "tracking-[0.46px]"}`}>{a}</div>
                  <div className="flex flex-1 items-center border-b border-[#c0c0c0] pl-[3px] tracking-[0.1px]">{b}</div>
                </div>
              ))}
              <div className="w-[13px] flex-1 bg-[#efefef]" />
              <div className="flex h-[15px] shrink-0 border-t border-[#b4b4b4]">
                <div className="flex w-[14px] items-center justify-center border-r border-[#b4b4b4] bg-[#fafafa]"><svg width="4" height="7"><path d="M4 0v7L0 3.500z" fill="#4d4d4d" /></svg></div>
                <div className="w-[282px] bg-linear-to-b from-white to-[#f1f1f1]" />
                <div className="flex-1 border-x border-[#b4b4b4] bg-[#e2e2e2]" />
                <div className="flex w-[13px] items-center justify-center bg-[#fafafa]"><svg width="4" height="7"><path d="M0 0v7l4-3.500z" fill="#4d4d4d" /></svg></div>
              </div>
            </div>
          </div>
          <div className="mt-[6px] pl-[5px] tracking-[0.36px]">Coordinate:674933.25068533,7462058.36997335,255.0</div>
        </div>
      </div>

      {/* status bar */}
      <div className="flex h-[31px] shrink-0 items-center pb-px text-[12px]">
        <div className="ml-1 flex h-[25px] w-[360px] items-center rounded-[3px] border border-[#b4b4b4] bg-white pl-2 text-[14px] italic tracking-[0.32px] text-[#bdbdbd]">
          <svg width="13" height="14" viewBox="0 0 13 14" fill="none" stroke="#8a8a8a" strokeWidth="1.300" className="mr-[8px]"><circle cx="5" cy="5" r="4" /><path d="M8 8.500l4.500 4.500" strokeWidth="1.800" /></svg>
          Escreva para localizar (Ctrl+K)
        </div>
        <div className="ml-[490px] h-[17px] w-[150px] rounded-[2px] border border-[#2475a8] bg-[repeating-linear-gradient(120deg,#3ba2e6_0_11px,#3499db_11px_21px)]" />
        <span className="ml-3.5 w-[70px]">Coordenada</span>
        <div className="h-[24px] w-[118px] rounded-[3px] border border-[#b4b4b4] bg-white text-center leading-[22px]">674933,7462058</div>
        <div className="ml-[4px] w-[16px]"><Ic s={16}><path d="M3 4l8 12M7 2l8 12M12 2l6 10M2 10l6 8" stroke="#222" strokeWidth="2" /><circle cx="6" cy="7" r="5" stroke="#222" /><circle cx="16" cy="17" r="5.500" stroke="#222" strokeWidth="1.500" /><path d="M15 6l7-4M18 9l4-3M14 14l4 6" stroke="#222" strokeWidth="1.500" /></Ic></div>
        <span className="ml-[12px] w-[37px]">Escala</span>
        <div className="flex h-6 w-[97px] rounded-[3px] border border-[#b4b4b4] bg-white pl-[3px]">
          <span className="flex-1 self-center tracking-[0.1px]">1:347559</span>
          <div className="flex w-5 items-center justify-center border-l border-[#b4b4b4] bg-[#f7f7f7]"><svg width="8" height="5"><path d="M0 0h8L4 4.500z" fill="#555" /></svg></div>
        </div>
        <svg width="12" height="15" viewBox="0 0 12 15" className="ml-3"><path d="M2.500 8V4a3.500 3 0 0 1 7 0v4" fill="none" stroke="#777" strokeWidth="1.800" /><rect y="6.500" width="12" height="8.500" rx="1" fill="#5e5e5e" /></svg>
        <span className="ml-[9px] w-[29px]">Lupa</span>
        <Spin cls="h-6 w-[97px]">100%</Spin>
        <span className="ml-[10px] w-[54px]">Rotação</span>
        <Spin cls="h-6 w-[93px]">0.0 °</Spin>
        <div className="ml-[8px]"><Check on /></div>
        <span className="ml-[4px] w-[75px]">Renderizar</span>
        <Ic s={15}><circle cx="12" cy="12" r="11" fill="#777" /><path d="M12 1v22M1 12h22M3 6h18M3 18h18M7 2c-3 6-3 14 0 20M17 2c3 6 3 14 0 20" stroke="#eee" strokeWidth="1.200" /></Ic>
        <span className="ml-[3px] w-[89px]">EPSG:31983</span>
        <svg width="17" height="16" viewBox="0 0 17 16"><ellipse cx="8.500" cy="7" rx="8" ry="6.500" fill="#5e5e5e" /><path d="M9 12l5 4-1-5z" fill="#5e5e5e" /><g fill="#fff"><circle cx="5" cy="7" r="1" /><circle cx="8.500" cy="7" r="1" /><circle cx="12" cy="7" r="1" /></g></svg>
      </div>
    </div>
  );
}
